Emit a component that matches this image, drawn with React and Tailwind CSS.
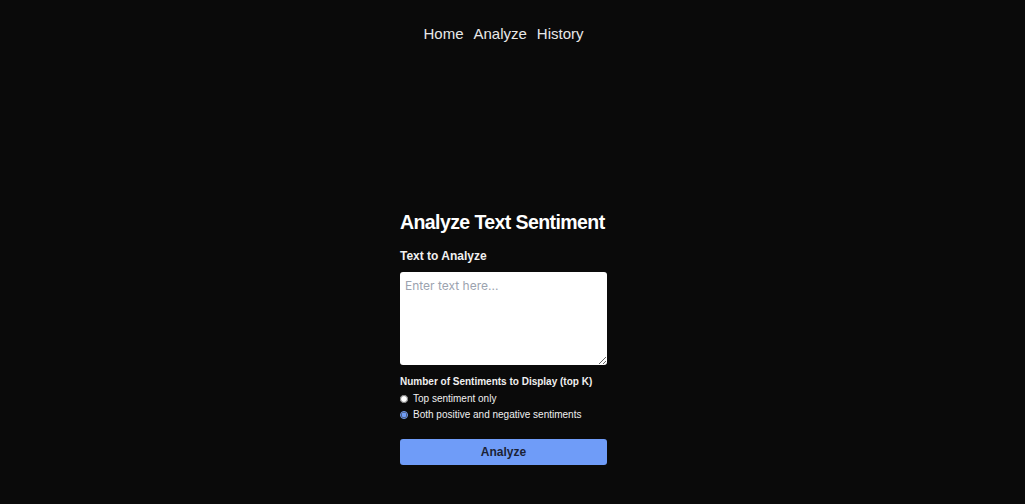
import React from "react";

export default function App() {
  return (
    <div className="min-h-[504px] bg-[#0a0a0a] text-[#ededed] flex flex-col pr-[18px]" style={{ fontFamily: '"Liberation Sans", Arial, sans-serif' }}>
      <nav className="flex justify-center gap-[10px] pt-[23px] text-[15px] font-medium text-[#e8e8e8]">
        <a href="#">Home</a>
        <a href="#">Analyze</a>
        <a href="#">History</a>
      </nav>
      <main className="flex justify-center pt-[164px]">
        <form className="w-[207px] flex flex-col" onSubmit={(e) => e.preventDefault()}>
          <h1 className="text-[19.5px] leading-[24px] font-bold tracking-[-0.03em] whitespace-nowrap text-white">Analyze Text Sentiment</h1>
          <label className="mt-[14px] text-[12px] leading-[16px] font-bold text-[#f0f0f0]">Text to Analyze</label>
          <textarea
            className="mt-[8px] h-[93px] w-full rounded-[3px] bg-white text-black px-[5px] py-[5px] text-[12px] placeholder:text-[#9ca3af] outline-none"
            style={{ fontFamily: 'Inter, "Liberation Sans", sans-serif' }}
            placeholder="Enter text here..."
          />
          <div className="mt-[10px] text-[10px] leading-[14px] font-bold text-[#f0f0f0]">Number of Sentiments to Display (top K)</div>
          <label className="mt-[3px] flex items-center gap-[5px] text-[10px] leading-[14px] text-[#f0f0f0]">
            <input type="radio" name="k" className="w-[8px] h-[8px] m-0 accent-[#6f9cf8]" />
            <span>Top sentiment only</span>
          </label>
          <label className="mt-[2px] flex items-center gap-[5px] text-[10px] leading-[14px] text-[#f0f0f0]">
            <input type="radio" name="k" defaultChecked className="w-[8px] h-[8px] m-0 accent-[#6f9cf8]" />
            <span>Both positive and negative sentiments</span>
          </label>
          <button type="submit" className="mt-[17px] h-[26px] w-full rounded-[3px] bg-[#6f9cf8] text-[#1b2235] text-[12px] font-bold">
            Analyze
          </button>
        </form>
      </main>
    </div>
  );
}
